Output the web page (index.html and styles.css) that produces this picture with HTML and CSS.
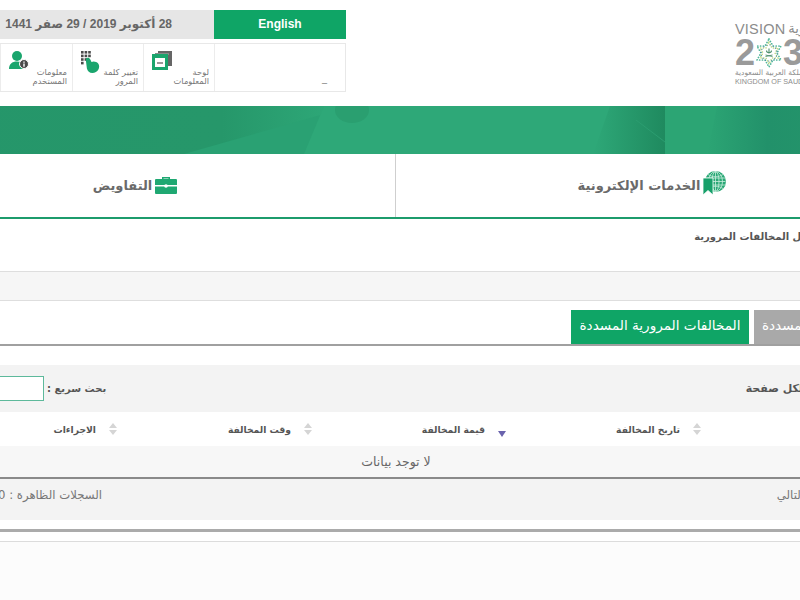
FILE: index.html
```html
<!DOCTYPE html>
<html lang="ar" dir="rtl">
<head>
<meta charset="utf-8">
<title>المخالفات المرورية</title>
<link rel="stylesheet" href="styles.css">
</head>
<body>
<div class="page">
  <header class="top">
    <div class="logo" dir="ltr">
      <div class="logo-line1"><span>VISION</span><span class="logo-ar">رؤية</span></div>
      <div class="logo-year">
        <span>2</span>
        <svg class="emblem" viewBox="0 0 30 30" width="30" height="30">
          <g fill="none" stroke-linecap="round">
            <path d="M15 1 19 8 27 8 23 15 27 22 19 22 15 29 11 22 3 22 7 15 3 8 11 8Z" stroke="#4fb59a" stroke-width="1.700" stroke-dasharray="0.100 2.700"/>
            <path d="M15 4 18 10 24 10 21 15 24 20 18 20 15 26 12 20 6 20 9 15 6 10 12 10Z" stroke="#b9d77f" stroke-width="1.500" stroke-dasharray="0.100 2.600"/>
            <circle cx="15" cy="15" r="8" stroke="#3f7f9c" stroke-width="1.100" stroke-dasharray="0.100 3.100"/>
          </g>
          <path d="M15 10.500v5M12.500 12.500c0 3 5 3 5 0" fill="none" stroke="#4d8f6c" stroke-width="1.100"/>
          <path d="M11.500 18.500 18.500 17M11.500 17 18.500 18.500" stroke="#4d8f6c" stroke-width="0.900"/>
        </svg>
        <span>30</span>
      </div>
      <div class="logo-ar-sub" dir="rtl">المملكة العربية السعودية</div>
      <div class="logo-en-sub">KINGDOM OF SAUDI ARABIA</div>
    </div>
    <div class="userbox">
      <div class="lang-row">
        <a class="lang">English</a>
        <div class="date">28 أكتوبر 2019 / 29 صفر 1441</div>
      </div>
      <div class="quick">
        <div class="quick-cell quick-name"><span>_</span></div>
        <div class="quick-cell">
          <svg class="qicon" viewBox="0 0 20 22" width="20" height="22">
            <path d="M6 0h14v15h-5V4H6z" fill="#666"/>
            <path d="M3 2h14v2H3z" fill="#8a8a8a"/>
            <rect x="1.500" y="4.500" width="13" height="13" fill="#fff" stroke="#1aa56d" stroke-width="3"/>
            <path d="M1.500 4h13v3h-13z" fill="#1aa56d"/>
            <path d="M5 11h6v2H5z" fill="#9a9a9a"/>
          </svg>
          <div class="qlabel">لوحة المعلومات</div>
        </div>
        <div class="quick-cell">
          <svg class="qicon" viewBox="0 0 20 22" width="20" height="22">
            <g fill="#4a4a4a">
              <rect x="0" y="0" width="2.600" height="2.600"/><rect x="3.600" y="0" width="2.600" height="2.600"/><rect x="7.200" y="0" width="2.600" height="2.600"/>
              <rect x="0" y="3.600" width="2.600" height="2.600"/><rect x="3.600" y="3.600" width="2.600" height="2.600"/><rect x="7.200" y="3.600" width="2.600" height="2.600"/>
              <rect x="0" y="7.200" width="2.600" height="2.600"/><rect x="3.600" y="7.200" width="2.600" height="2.600"/>
              <rect x="0" y="10.800" width="2.600" height="2.600"/>
            </g>
            <path d="M5 7.500c1.500-1.500 3.500-.8 4.200.8l1.300 2.700c2-1.200 5-.4 6.500 1.200 1.500 1.700 1.500 4.300.4 6.300-1.200 2.200-3.500 3.500-6 3.500-2.800 0-5-1.800-5.500-4.500L5 10.500z" fill="#1aa56d"/>
          </svg>
          <div class="qlabel">تغيير كلمة المرور</div>
        </div>
        <div class="quick-cell">
          <svg class="qicon" viewBox="0 0 20 22" width="20" height="22">
            <circle cx="8" cy="5" r="5" fill="#1aa56d"/>
            <path d="M0 18c0-5 3-7.500 8-7.500 3 0 5 .8 6.500 2.500v5z" fill="#1aa56d"/>
            <circle cx="15" cy="13" r="4.500" fill="#4a4a4a" stroke="#fff"/>
            <path d="M15 10.400v1.300M15 12.500v3.200" stroke="#fff" stroke-width="1.400"/>
          </svg>
          <div class="qlabel">معلومات المستخدم</div>
        </div>
        <div class="quick-rest"></div>
      </div>
    </div>
  </header>

  <svg class="hero" viewBox="0 0 1024 48" preserveAspectRatio="none" aria-hidden="true">
    <defs>
      <linearGradient id="heroBase" x1="0" x2="1" y1="0" y2="0">
        <stop offset="0" stop-color="#25966a"/>
        <stop offset="0.33" stop-color="#26976a"/>
        <stop offset="0.44" stop-color="#2ea878"/>
        <stop offset="1" stop-color="#2ea878"/>
      </linearGradient>
      <linearGradient id="heroDark" x1="0" x2="1" y1="0" y2="0">
        <stop offset="0" stop-color="#2ea878"/>
        <stop offset="1" stop-color="#1f8a5f"/>
      </linearGradient>
      <linearGradient id="heroRight" x1="0" x2="1" y1="0" y2="0">
        <stop offset="0" stop-color="#2ca574"/>
        <stop offset="0.3" stop-color="#22916a"/>
        <stop offset="1" stop-color="#27996c"/>
      </linearGradient>
    </defs>
    <rect width="1024" height="48" fill="url(#heroBase)"/>
    <path d="M300 48 440 8 440 48Z" fill="#2aa173"/>
    <path d="M440 0h60v48h-80z" fill="#2ea878"/>
    <ellipse cx="468" cy="4" rx="17" ry="13" fill="#2a9f70"/>
    <path d="M726 0h55v48h-72z" fill="url(#heroDark)"/>
    <path d="M752 14l29 22" stroke="#2b9d70" stroke-width="1"/>
    <path d="M781 0h52l-10 48h-42z" fill="#2ca574"/>
    <path d="M833 0h191v48H823z" fill="url(#heroRight)"/>
  </svg>

  <nav class="mainnav">
    <a class="navitem">
      <svg class="globe" viewBox="0 0 24 24" width="24" height="24">
        <circle cx="13.500" cy="10.500" r="10.500" fill="#2aa876"/>
        <g fill="none" stroke="#c9eedd" stroke-width="0.800">
          <path d="M3.500 7h20M3.500 10.500h20M3.500 14h20M13.500 .5v20M6 3.500c5 3 10 3 15 0M6 17.500c5-3 10-3 15 0"/>
          <ellipse cx="13.500" cy="10.500" rx="3.500" ry="10"/>
          <ellipse cx="13.500" cy="10.500" rx="7" ry="10"/>
        </g>
        <path d="M1 7h10v17l-5-4.500L1 24z" fill="#17a06a" stroke="#fff" stroke-width="0.800"/>
      </svg>
      <span>الخدمات الإلكترونية</span>
    </a>
    <a class="navitem navitem-left">
      <svg viewBox="0 0 22 18" width="22" height="18">
        <path d="M7 3V1h8v2h-1.500V2.500h-5V3z" fill="#1fa872"/>
        <path d="M0 4a1 1 0 0 1 1-1h20a1 1 0 0 1 1 1v5H0z" fill="#1fa872"/>
        <path d="M0 10.500h22V17a1 1 0 0 1-1 1H1a1 1 0 0 1-1-1z" fill="#1fa872"/>
        <circle cx="11" cy="10" r="1.800" fill="#fff"/>
      </svg>
      <span>التفاويض</span>
    </a>
  </nav>

  <div class="crumb">تفاصيل المخالفات المرورية</div>
  <div class="strip"></div>

  <div class="tabs">
    <a class="tab tab-off">المخالفات غير المسددة</a>
    <a class="tab tab-on">المخالفات المرورية المسددة</a>
  </div>

  <div class="toolbar">
    <div class="perpage">لكل صفحة</div>
    <label class="search"><span>بحث سريع :</span><input class="search-box" type="text"></label>
  </div>

  <table class="grid">
    <colgroup>
      <col class="c-a"><col class="c-b"><col class="c-c"><col class="c-d"><col class="c-e">
    </colgroup>
    <thead>
      <tr>
        <th><span class="th"><svg class="sort" viewBox="0 0 8 12" width="8" height="12"><path d="M4 0 8 5H0zM4 12 0 7h8z" fill="#d5d5d5"/></svg>رقم المخالفة</span></th>
        <th><span class="th"><svg class="sort" viewBox="0 0 8 12" width="8" height="12"><path d="M4 0 8 5H0zM4 12 0 7h8z" fill="#d5d5d5"/></svg>تاريخ المخالفة</span></th>
        <th><span class="th"><svg class="sort sort-on" viewBox="0 0 8 12" width="8" height="12"><path d="M4 11 0 5h8z" fill="#6a63ad"/></svg>قيمة المخالفة</span></th>
        <th><span class="th"><svg class="sort" viewBox="0 0 8 12" width="8" height="12"><path d="M4 0 8 5H0zM4 12 0 7h8z" fill="#d5d5d5"/></svg>وقت المخالفة</span></th>
        <th><span class="th"><svg class="sort" viewBox="0 0 8 12" width="8" height="12"><path d="M4 0 8 5H0zM4 12 0 7h8z" fill="#d5d5d5"/></svg>الاجراءات</span></th>
      </tr>
    </thead>
    <tbody>
      <tr><td colspan="5">لا توجد بيانات</td></tr>
    </tbody>
  </table>

  <div class="pager">
    <span class="next">التالي</span>
    <span class="count">السجلات الظاهرة : 0</span>
  </div>

  <div class="rule-thick"></div>
  <div class="rule-thin"></div>
  <div class="foot"></div>
</div>
</body>
</html>
```
FILE: styles.css
```css
* { box-sizing: border-box; }
html, body { margin: 0; padding: 0; height: 600px; overflow: hidden; background: #fff; }
body { font-family: "DejaVu Sans", sans-serif; color: #555; }
.page { width: 1024px; margin-right: -108px; direction: rtl; }

/* header */
.top { height: 106px; display: flex; justify-content: space-between; padding-right: 43px; padding-top: 10px; }
.logo { width: 130px; padding-top: 11px; color: #8c8c8c; font-family: "Liberation Sans", sans-serif; }
.logo-line1 { display: flex; align-items: center; gap: 3px; font-size: 14.5px; line-height: 16px; letter-spacing: .2px; }
.logo-ar { font-family: "DejaVu Sans", sans-serif; font-size: 13px; }
.logo-year { display: flex; align-items: center; height: 30px; font-size: 36px; font-weight: 700; line-height: 30px; margin-top: 1px; color: #9a9a9a; }
.emblem { margin: 0 -1px 0 -1px; }
.logo-ar-sub { text-align: left; font-family: "DejaVu Sans", sans-serif; font-size: 7.500px; line-height: 9px; white-space: nowrap; }
.logo-en-sub { font-size: 7.200px; line-height: 9px; white-space: nowrap; }

.userbox { width: 462px; }
.lang-row { display: flex; height: 29px; }
.lang { width: 132px; background: #0fa566; color: #fff; font: 700 12px/29px "Liberation Sans", sans-serif; text-align: center; direction: ltr; }
.date { flex: 1; background: #e6e6e6; color: #666; padding-right: 42px; font: 700 12px/29px "Liberation Sans", "DejaVu Sans", sans-serif; white-space: nowrap; }
.quick { display: flex; height: 49px; margin-top: 4px; border: 1px solid #e8e8e8; border-left: 0; }
.quick-cell { width: 71px; border-left: 1px solid #ececec; padding: 7px 5px 0 8px; display: flex; flex-direction: column; align-items: flex-start; }
.quick-cell:nth-child(4) { width: 72px; }
.quick-name { width: 131px; padding: 28px 18px 0 0; font-size: 10px; color: #888; }
.qicon { align-self: flex-end; display: block; }
.qlabel { font-size: 8.300px; line-height: 8.500px; color: #777; width: 46px; margin-top: -5px; }
.quick-rest { flex: 1; }

/* hero */
.hero { display: block; width: 1024px; height: 48px; }

/* nav */
.mainnav { display: grid; grid-template-columns: 512px 512px; height: 65px; border-bottom: 2px solid #1c9c6c; }
.navitem { display: flex; align-items: center; justify-content: center; gap: 2px; font-size: 13px; font-weight: 700; color: #6a6a6a; padding-bottom: 1px; }
.navitem + .navitem { border-right: 1px solid #cfcfcf; }
.navitem-left { padding-right: 9px; gap: 3px; }
.globe { margin-bottom: 5px; }

.crumb { height: 52px; padding: 10px 78px 0 0; font-size: 10px; font-weight: 700; color: #555; line-height: 16px; white-space: nowrap; }
.strip { height: 30px; background: #f6f6f6; border-top: 1px solid #dedede; border-bottom: 1px solid #dedede; }

/* tabs */
.tabs { display: flex; gap: 5px; height: 45px; padding-top: 9px; border-bottom: 2px solid #a0a0a0; }
.tab { height: 34px; line-height: 31px; font-size: 13.600px; color: #fff; white-space: nowrap; text-align: center; }
.tab-off { width: 154px; padding-right: 6px; background: #a9a9a9; }
.tab-on { width: 178px; background: #0fa566; }

/* toolbar */
.toolbar { margin-top: 19px; height: 47px; background: #f3f3f3; display: flex; justify-content: space-between; align-items: center; padding: 0 105px 0 0; }
.perpage { font-size: 11px; font-weight: 700; color: #555; line-height: 16px; margin-top: 1px; white-space: nowrap; }
.search { display: flex; align-items: center; gap: 3px; font-size: 10px; font-weight: 700; color: #555; }
.search-box { width: 160px; height: 25px; border: 1px solid #5db99b; background: #fff; margin: 0; padding: 0; }

/* table */
.grid { width: 1024px; border-collapse: collapse; table-layout: fixed; }
.c-a, .c-b, .c-d { width: 195px; }
.c-c { width: 194px; }
.c-e { width: 245px; }
.grid th { height: 34px; padding: 0 12px 0 0; font-size: 9.200px; font-weight: 700; color: #555; text-align: right; background: #fff; }
.th { display: flex; align-items: center; gap: 13px; white-space: nowrap; }
.sort { flex: none; }
.sort-on { margin-top: 5px; }
.grid td { height: 32px; background: #f7f7f7; border-bottom: 2px solid #8a8a8a; font-size: 12.500px; color: #666; text-align: center; padding: 0; }

.pager { height: 41px; background: #f3f3f3; display: flex; justify-content: space-between; padding: 8px 0 0 0; font-size: 11.700px; color: #777; line-height: 16px; }
.next { margin-right: 104px; }
.count { margin-left: 114px; }
.rule-thick { height: 3px; margin-top: 9px; background: #ababab; }
.rule-thin { height: 1px; margin-top: 9px; background: #dcdcdc; }
.foot { height: 59px; background: #fcfcfc; }
```
